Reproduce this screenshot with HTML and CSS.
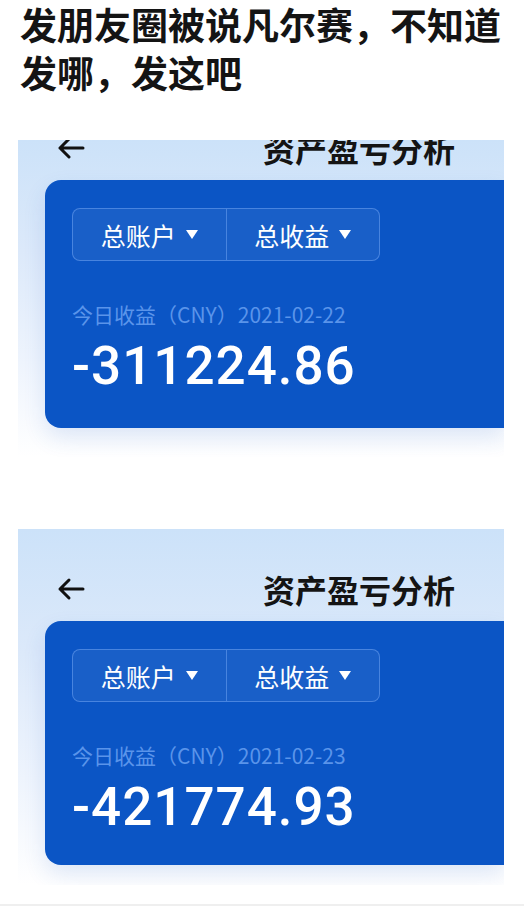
FILE: index.html
```html
<!DOCTYPE html>
<html lang="zh-CN">
<head>
  <meta charset="UTF-8">
  <meta name="viewport" content="width=device-width, initial-scale=1.0">
  <title>资产盈亏分析</title>
  <link rel="stylesheet" href="styles.css">
</head>
<body>
  <h1 class="headline">发朋友圈被说凡尔赛，不知道发哪，发这吧</h1>

  <!-- first screenshot, header cut off at the top -->
  <div class="shot shot-first">
    <div class="bar bar-cut">
      <svg class="back" width="30" height="24" viewBox="0 0 30 24">
        <path d="M27 12H4M13 3L4 12l9 9" fill="none" stroke="#111" stroke-width="3" stroke-linecap="round" stroke-linejoin="round"/>
      </svg>
      <span class="bar-title">资产盈亏分析</span>
    </div>
    <div class="card">
      <div class="tabs">
        <div class="tab">总账户 <span class="caret"></span></div>
        <div class="tab">总收益 <span class="caret"></span></div>
      </div>
      <p class="label">今日收益（CNY）2021-02-22</p>
      <p class="amount">-311224.86</p>
    </div>
  </div>

  <div class="shot shot-second">
    <div class="bar">
      <svg class="back" width="30" height="24" viewBox="0 0 30 24">
        <path d="M27 12H4M13 3L4 12l9 9" fill="none" stroke="#111" stroke-width="3" stroke-linecap="round" stroke-linejoin="round"/>
      </svg>
      <span class="bar-title">资产盈亏分析</span>
    </div>
    <div class="card">
      <div class="tabs">
        <div class="tab">总账户 <span class="caret"></span></div>
        <div class="tab">总收益 <span class="caret"></span></div>
      </div>
      <p class="label">今日收益（CNY）2021-02-23</p>
      <p class="amount">-421774.93</p>
    </div>
  </div>

  <div class="foot"></div>
</body>
</html>
```

FILE: styles.css
```css
body {
  margin: 0;
  background-color: #ffffff;
  font-family: "Noto Sans CJK SC", "Noto Sans", sans-serif;
  color: #111;
}
.headline {
  margin: 0;
  padding: 0 4px 0 20px;
  font-size: 37px;
  line-height: 48px;
  font-weight: 700;
  color: #141414;
}
.shot {
  margin-left: 18px;
  width: 486px;
  overflow: hidden;
  background: linear-gradient(180deg, #cce2f9 0%, #dce9fa 35%, #eef4fd 70%, #ffffff 100%);
}
.shot-first {
  margin-top: 44px;
  padding-bottom: 29px;
}
.shot-first .card {
  padding-bottom: 34px;
}
.shot-second {
  margin-top: 72px;
  padding-bottom: 20px;
}
.bar {
  height: 92px;
  display: flex;
  align-items: flex-end;
  justify-content: space-between;
  padding: 0 49px 16px 38px;
  box-sizing: border-box;
}
.bar-cut {
  margin-top: -52px;
}
.back {
  display: block;
  margin-bottom: 4px;
}
.bar-title {
  font-size: 32px;
  line-height: 32px;
  font-weight: 700;
  color: #141414;
}
.card {
  margin-left: 27px;
  padding: 28px 0 30px 27px;
  background-color: #0b55c5;
  border-radius: 16px 0 0 16px;
  box-shadow: 0 10px 22px rgba(40, 100, 200, 0.14);
}
.tabs {
  display: flex;
  width: 308px;
  height: 53px;
  border: 1px solid rgba(120, 170, 245, 0.5);
  border-radius: 8px;
  background-color: rgba(255, 255, 255, 0.06);
  box-sizing: border-box;
}
.tab {
  flex: 1;
  display: flex;
  align-items: center;
  justify-content: center;
  gap: 10px;
  font-size: 25px;
  color: #ffffff;
}
.tab + .tab {
  border-left: 1px solid rgba(120, 170, 245, 0.5);
}
.caret {
  width: 0;
  height: 0;
  border-left: 6px solid transparent;
  border-right: 6px solid transparent;
  border-top: 9px solid #ffffff;
}
.label {
  margin: 41px 0 0;
  font-size: 21px;
  line-height: 24px;
  color: #5a94ea;
}
.amount {
  margin: 12px 0 0;
  font-family: Roboto, "Noto Sans", sans-serif;
  font-size: 53px;
  line-height: 56px;
  font-weight: 500;
  letter-spacing: 1px;
  color: #ffffff;
}
.foot {
  margin-top: 19px;
  height: 4px;
  background-color: #efefef;
}
```
